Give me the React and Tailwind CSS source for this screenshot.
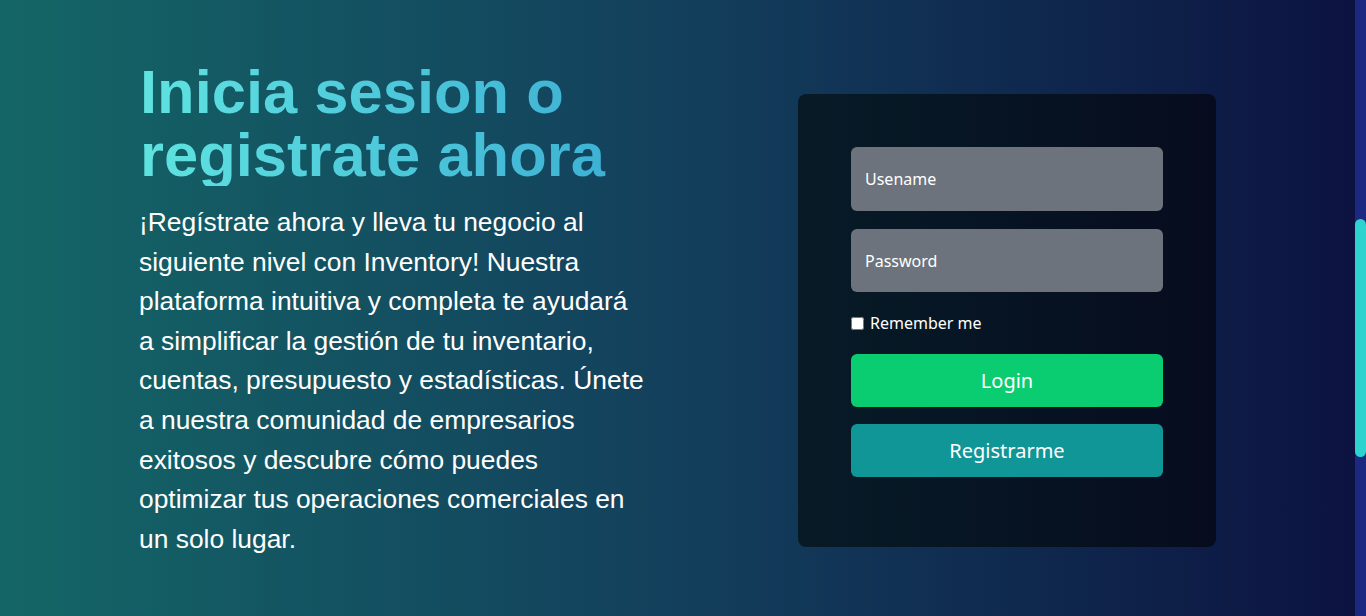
export default function App() {
  return (
    <div className="flex h-[616px] w-full overflow-hidden bg-gradient-to-r from-[#146666] via-[#133f5c] to-[#0c1240]">
      <main className="flex flex-1 items-start">
        <section className="ml-[139px] mt-[60px] w-[508px] font-['Liberation_Sans',Arial,sans-serif]">
          <h1 className="bg-gradient-to-r from-[#60e3e0] to-[#3badd3] bg-clip-text pl-[1px] text-[61.5px] font-bold leading-[63px] text-transparent">
            Inicia sesion o
            <br />
            registrate ahora
          </h1>
          <p className="mt-[17px] text-[26.4px] leading-[39.6px] text-white">
            ¡Regístrate ahora y lleva tu negocio al siguiente nivel con Inventory! Nuestra plataforma
            intuitiva y completa te ayudará a simplificar la gestión de tu inventario, cuentas,
            presupuesto y estadísticas. Únete a nuestra comunidad de empresarios exitosos y descubre
            cómo puedes optimizar tus operaciones comerciales en un solo lugar.
          </p>
        </section>

        <form className="ml-[151px] mt-[94px] flex w-[418px] flex-col rounded-lg bg-gradient-to-r from-[#071b27] to-[#060c1e] px-[53px] pb-[70px] pt-[53px] font-['Noto_Sans','Open_Sans',sans-serif]">
          <input
            type="text"
            placeholder="Usename"
            className="h-[64px] w-full rounded-md bg-[#6c737c] px-[14px] text-[16px] text-white placeholder:text-white outline-none"
          />
          <input
            type="password"
            placeholder="Password"
            className="mt-[18px] h-[63px] w-full rounded-md bg-[#6c737c] px-[14px] text-[16px] text-white placeholder:text-white outline-none"
          />
          <label className="mt-[19px] flex items-center gap-[6px] text-[16px] text-white">
            <input type="checkbox" className="h-[13px] w-[13px]" />
            Remember me
          </label>
          <button
            type="button"
            className="mt-[19px] h-[53px] w-full rounded-md bg-[#0acd72] text-[20px] text-white"
          >
            Login
          </button>
          <button
            type="button"
            className="mt-[17px] h-[53px] w-full rounded-md bg-[#119697] text-[20px] text-white"
          >
            Registrarme
          </button>
        </form>
      </main>

      {/* fake scrollbar */}
      <div className="flex w-[11px] flex-col bg-[#1b2a80] pt-[219px]">
        <div className="h-[238px] w-full rounded-full bg-[#2dd4cf]" />
      </div>
    </div>
  );
}
